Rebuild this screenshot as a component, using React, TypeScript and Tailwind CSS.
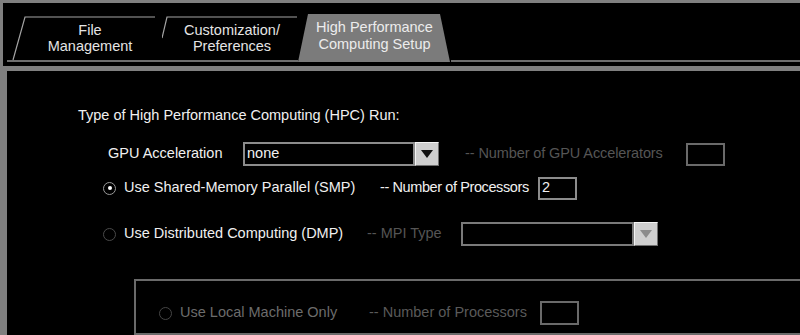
import React from "react";

const font = { fontFamily: '"Liberation Sans", Arial, sans-serif' };

function DropButton({ disabled }: { disabled?: boolean }) {
  return (
    <div className="flex h-[24px] w-[24px] items-center justify-center border border-t-[#f4f4f4] border-l-[#f4f4f4] border-r-[#6f6f6f] border-b-[#6f6f6f] bg-[#cfcfcf]">
      <svg width="12" height="8" viewBox="0 0 12 8">
        <polygon points="0,0 12,0 6,8" fill={disabled ? "#8c8c8c" : "#111"} />
      </svg>
    </div>
  );
}

function Radio({ checked, dim }: { checked?: boolean; dim?: boolean }) {
  return (
    <div
      className={
        dim
          ? "flex h-[13px] w-[13px] items-center justify-center rounded-full border border-[#454545]"
          : checked
          ? "flex h-[13px] w-[13px] items-center justify-center rounded-full border-[1.5px] border-[#9a9a9a]"
          : "flex h-[13px] w-[13px] items-center justify-center rounded-full border-[1.5px] border-[#4a4a4a]"
      }
    >
      {checked && <div className="h-[4px] w-[4px] rounded-full bg-white" />}
    </div>
  );
}

export default function App() {
  return (
    <div className="flex h-[335px] w-[800px] flex-col overflow-hidden bg-[#7f7f7f] text-[14.5px]" style={font}>
      {/* tab strip */}
      <div className="ml-[3px] mt-[3px] flex h-[63px] items-end bg-black pb-[4px] pl-[4px] text-[#e4e4e4]">
        <div className="relative flex h-[48px] w-[155px] flex-col items-center justify-center pl-[11px] leading-[16px]">
          <svg className="absolute inset-0" width="155" height="48" viewBox="0 0 155 48">
            <rect x="0" y="46" width="155" height="2" fill="#6e6e6e" />
            <polyline points="6,46 18,3 148,3" fill="none" stroke="#a4a4a4" strokeWidth="1.2" />
          </svg>
          <span className="relative">File</span>
          <span className="relative">Management</span>
        </div>
        <div className="relative flex h-[48px] w-[136px] flex-col items-center justify-center pl-[4px] leading-[16px]">
          <svg className="absolute inset-0" width="136" height="48" viewBox="0 0 136 48">
            <rect x="0" y="46" width="136" height="2" fill="#6e6e6e" />
            <polyline points="0,24 5,3 135,3" fill="none" stroke="#a4a4a4" strokeWidth="1.2" />
          </svg>
          <span className="relative">Customization/</span>
          <span className="relative">Preferences</span>
        </div>
        <div className="relative flex h-[48px] w-[153px] flex-col items-center justify-center pb-[5px] leading-[17px] text-[#ececec]">
          <svg className="absolute inset-0" width="153" height="48" viewBox="0 0 153 48">
            <polygon points="0,48 10,0 142,0 152,48" fill="#7b7b7b" />
          </svg>
          <span className="relative">High Performance</span>
          <span className="relative">Computing Setup</span>
        </div>
        <div className="h-[2px] flex-1 bg-[#6e6e6e]" />
      </div>

      {/* content panel */}
      <div className="ml-[7px] mt-[5px] flex flex-1 flex-col bg-black pt-[35px] text-[#f0f0f0]">
        <div className="ml-[71px] flex h-[20px] items-center">Type of High Performance Computing (HPC) Run:</div>

        <div className="ml-[101px] mt-[16px] flex h-[24px] items-center">
          <span className="w-[135px]">GPU Acceleration</span>
          <div className="flex h-[24px] w-[172px] items-center border-2 border-[#8c8c8c] bg-black pl-[2px]">none</div>
          <DropButton />
          <span className="ml-[26px] w-[221px] tracking-[-0.1px] text-[#555]">-- Number of GPU Accelerators</span>
          <div className="h-[23px] w-[39px] border-2 border-[#6a6a6a]" />
        </div>

        <div className="ml-[96px] mt-[10px] flex h-[24px] items-center">
          <Radio checked />
          <span className="ml-[8px] w-[256px]">Use Shared-Memory Parallel (SMP)</span>
          <span className="w-[158px] tracking-[-0.4px]">-- Number of Processors</span>
          <div className="flex h-[23px] w-[39px] items-center border-2 border-[#8c8c8c] pl-[2px]">2</div>
        </div>

        <div className="ml-[96px] mt-[22px] flex h-[24px] items-center">
          <Radio />
          <span className="ml-[8px] w-[243px]">Use Distributed Computing (DMP)</span>
          <span className="w-[94px] text-[#555]">-- MPI Type</span>
          <div className="h-[24px] w-[173px] border-2 border-[#7a7a7a]" />
          <DropButton disabled />
        </div>

        <div className="ml-[127px] mt-[33px] flex-1 border-2 border-r-0 border-[#6a6a6a] pl-[23px] pt-[20px]">
          <div className="flex h-[24px] items-center text-[#6c6c6c]">
            <Radio dim />
            <span className="ml-[8px] w-[189px]">Use Local Machine Only</span>
            <span className="w-[171px] text-[#5a5a5a]">-- Number of Processors</span>
            <div className="h-[24px] w-[39px] border-2 border-[#6a6a6a]" />
          </div>
        </div>
      </div>
    </div>
  );
}
